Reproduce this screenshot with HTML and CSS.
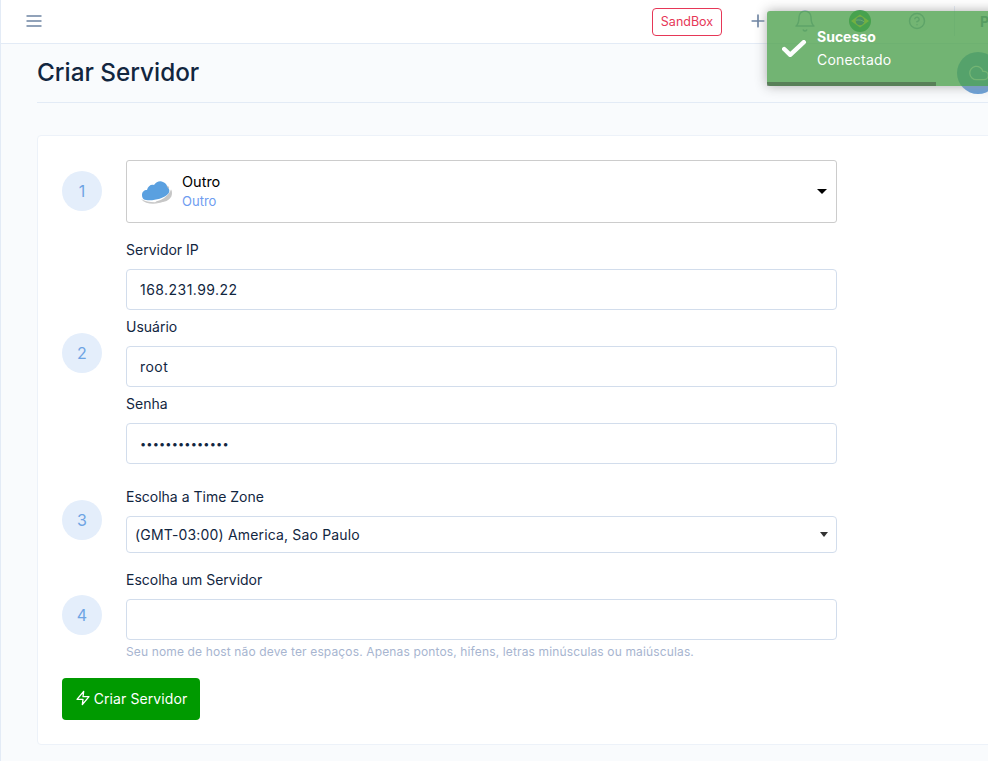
FILE: index.html
```html
<!DOCTYPE html>
<html lang="pt">
<head>
<meta charset="utf-8">
<title>Criar Servidor</title>
<link rel="stylesheet" href="styles.css">
</head>
<body>
<div class="app">
  <header class="topbar">
    <svg class="menu-icon" viewBox="0 0 24 24" width="20" height="20"><path d="M3 12h18M3 6h18M3 18h18"/></svg>
    <div class="topbar-right">
      <span class="sandbox">SandBox</span>
      <svg class="nav-icon plus" viewBox="0 0 24 24" width="20" height="20"><path d="M12 5v14M5 12h14"/></svg>
      <svg class="nav-icon bell" viewBox="0 0 24 24" width="24" height="24"><path d="M18 8A6 6 0 0 0 6 8c0 7-3 9-3 9h18s-3-2-3-9"/><path d="M13.7 21a2 2 0 0 1-3.4 0"/></svg>
      <svg class="flag" viewBox="0 0 22 22" width="22" height="22"><circle cx="11" cy="11" r="11" fill="#229e45"/><path d="M11 4.5 20 11l-9 6.5L2 11z" fill="#f8e509"/><circle cx="11" cy="11" r="4.3" fill="#2b49a3"/><path d="M7 10.200c3-.6 6-.1 8 1.600" stroke="#fff" stroke-width=".8" fill="none"/></svg>
      <svg class="nav-icon help" viewBox="0 0 24 24" width="18" height="18"><circle cx="12" cy="12" r="10"/><path d="M9.100 9a3 3 0 0 1 5.800 1c0 2-3 3-3 3M12 17h.01"/></svg>
      <span class="divider"></span>
      <span class="avatar-letter">P</span>
    </div>
  </header>

  <main class="content">
    <h1 class="page-title">Criar Servidor</h1>
    <section class="card">
      <div class="step step-1">
        <span class="badge">1</span>
        <div class="step-body">
          <div class="provider">
            <svg class="provider-logo" viewBox="0 0 32 28" width="32" height="28">
              <path d="M24 7C28 8 31 11 31 15 31 20 27 23 22 24L14 25Z" fill="#c6c6c6"/>
              <path d="M0 20C7 25 21 24 28 13L30 8" fill="none" stroke="#fff" stroke-width="2.500"/>
              <path d="M0 21C5 27 16 27 23 23 16 25 7 25 0 21Z" fill="#c9c9c9"/>
              <path d="M5 22C2 22 1 19 1 17 1 14 3 12 6 12 7 8 10 6 13 7 15 4 19 2 22 4 25 5 26 7 26 9 29 11 29 14 27 16 22 21 12 23 5 22Z" fill="#5aa0e0"/>
            </svg>
            <div class="provider-text">
              <span class="provider-name">Outro</span>
              <span class="provider-sub">Outro</span>
            </div>
            <span class="caret-black"></span>
          </div>
        </div>
      </div>

      <div class="step step-2">
        <span class="badge">2</span>
        <div class="step-body fields">
          <div class="field">
            <label class="label" for="ip">Servidor IP</label>
            <input class="input" id="ip" type="text" value="168.231.99.22">
          </div>
          <div class="field">
            <label class="label" for="user">Usuário</label>
            <input class="input" id="user" type="text" value="root">
          </div>
          <div class="field">
            <label class="label" for="pass">Senha</label>
            <input class="input input-pass" id="pass" type="password" value="senha12345678x">
          </div>
        </div>
      </div>

      <div class="step step-3">
        <span class="badge">3</span>
        <div class="step-body">
          <label class="label" for="tz">Escolha a Time Zone</label>
          <div class="select-wrap">
            <select class="select" id="tz"><option>(GMT-03:00) America, Sao Paulo</option></select>
            <span class="caret-small"></span>
          </div>
        </div>
      </div>

      <div class="step step-4">
        <span class="badge">4</span>
        <div class="step-body">
          <label class="label" for="host">Escolha um Servidor</label>
          <input class="input" id="host" type="text">
          <small class="help-text">Seu nome de host não deve ter espaços. Apenas pontos, hifens, letras minúsculas ou maiúsculas.</small>
        </div>
      </div>

      <button class="btn" type="button">
        <svg viewBox="0 0 24 24" width="16" height="16"><path d="M13 2 3 14h9l-1 8 10-12h-9z"/></svg>
        Criar Servidor
      </button>
    </section>
  </main>
</div>

<div class="fab">
  <svg viewBox="0 0 24 24" width="20" height="20"><path d="M18 10h-1.300A8 8 0 1 0 9 20h9a5 5 0 0 0 0-10z"/></svg>
</div>

<div class="toast">
  <svg class="toast-check" viewBox="0 0 26 20" width="26" height="20"><path d="M2.200 9l6 5.800L21.800 2.200"/></svg>
  <div class="toast-text">
    <strong class="toast-title">Sucesso</strong>
    <span class="toast-msg">Conectado</span>
  </div>
  <span class="toast-progress"></span>
</div>
</body>
</html>
```

FILE: styles.css
```css
* { box-sizing: border-box; }
html, body { margin: 0; height: 100%; overflow: hidden; }
body {
  background: #f9fbfd;
  font-family: Inter, "Liberation Sans", sans-serif;
  color: #12263f;
  font-size: 14px;
  border-left: 1px solid #e3ebf6;
}
.app { width: 1100px; }

.topbar {
  height: 44px;
  background: #fff;
  border-bottom: 1px solid #e3ebf6;
  display: flex;
  align-items: center;
  padding: 0 0 1px 23px;
  width: 987px;
}
.menu-icon { fill: none; stroke: #6e84a3; stroke-width: 2; }
.topbar-right { margin-left: auto; display: flex; align-items: center; height: 100%; }
.sandbox {
  width: 70px; height: 28px;
  margin-top: 1px;
  border: 1px solid #e63757; border-radius: 4px;
  color: #e63757; font-size: 12.500px;
  display: flex; align-items: center; justify-content: center;
}
.nav-icon { fill: none; stroke: #6e84a3; stroke-width: 2; stroke-linecap: round; stroke-linejoin: round; }
.plus { margin-left: 26px; }
.bell { margin-left: 25px; stroke: #95aac9; stroke-width: 1.500; }
.flag { margin-left: 32px; }
.help { margin-left: 37px; stroke: #95aac9; }
.divider { width: 1px; height: 30px; background: #e3ebf6; margin-left: 28px; }
.avatar-letter { margin-left: 25px; width: 8px; font-weight: 700; color: #6e84a3; font-size: 14px; white-space: nowrap; }

.content { padding: 0 0 0 36px; }
.page-title {
  margin: 0;
  height: 59px;
  font-size: 24.300px;
  font-weight: 500;
  line-height: 56px;
  border-bottom: 1px solid #e3ebf6;
  width: 1000px;
  color: #12263f;
}
.card {
  margin-top: 32px;
  width: 1000px;
  height: 610px;
  background: #fff;
  border: 1px solid #edf2f9;
  border-radius: 4px;
  padding: 24px 24px 0;
}
.step { display: flex; align-items: center; width: 775px; }
.step-1 .badge { margin-top: -1px; }
.step-2 .badge { margin-top: 2px; }
.step-2 { margin-top: 16px; }
.step-3 { margin-top: 22px; }
.step-4 { margin-top: 16px; }
.badge {
  flex: none;
  width: 40px; height: 40px;
  border-radius: 50%;
  background: #e4eefb;
  color: #6ea4e4;
  font-size: 16px;
  display: flex; align-items: center; justify-content: center;
  margin-right: 24px;
}
.step-body { width: 711px; }
.fields { display: flex; flex-direction: column; gap: 6px; }
.label { display: block; height: 21px; line-height: 21px; margin-bottom: 9px; font-size: 14px; }
.input {
  display: block;
  width: 100%; height: 41px;
  border: 1px solid #d2ddec;
  border-radius: 4px;
  background: #fff;
  padding: 0 13px;
  font: inherit;
  letter-spacing: .45px;
  color: #12263f;
}
.input-pass { font-size: 11px; letter-spacing: .15px; }
.provider {
  display: flex; align-items: center;
  height: 63px;
  border: 1px solid #ccc;
  border-radius: 3px;
  padding: 0 9px 0 14px;
}
.provider-logo { flex: none; margin-right: 9px; }
.provider-text { display: flex; flex-direction: column; gap: 4px; margin-top: -2px; }
.provider-name { color: #000; font-size: 14.500px; line-height: 17px; }
.provider-sub { color: #6e9cf0; font-size: 13px; line-height: 15px; }
.caret-black {
  margin-left: auto;
  width: 0; height: 0;
  border: 5px solid transparent;
  border-top-color: #000;
  border-bottom: 0;
}
.select-wrap { position: relative; }
.select {
  display: block;
  width: 100%; height: 37px;
  appearance: none;
  border: 1px solid #d2ddec;
  border-radius: 4px;
  background: #fff;
  padding: 0 8px;
  font: inherit;
  letter-spacing: .17px;
  color: #12263f;
}
.caret-small {
  position: absolute;
  right: 9px; top: 16px;
  width: 0; height: 0;
  border: 4px solid transparent;
  border-top: 5px solid #333;
  border-bottom: 0;
}
.help-text {
  display: block;
  margin-top: 4px;
  font-size: 12px;
  line-height: 16px;
  letter-spacing: .14px;
  color: #a7b5d0;
}
.btn {
  margin-top: 18px;
  width: 138px; height: 42px;
  padding: 0 0 2px;
  background: #009a00;
  border: 0; border-radius: 4px;
  color: #fff;
  font: inherit;
  letter-spacing: .1px;
  display: flex; align-items: center; justify-content: center; gap: 3px;
}
.btn svg { fill: none; stroke: #fff; stroke-width: 2; stroke-linejoin: round; }

.fab {
  position: absolute;
  left: 957px; top: 52px;
  width: 42px; height: 42px;
  border-radius: 50%;
  background: #689fd8;
  display: flex; align-items: center; justify-content: center;
}
.fab svg { fill: none; stroke: #fff; stroke-width: 1.500; margin-left: 2px; }

.toast {
  position: absolute;
  left: 767px; top: 11px;
  width: 300px; height: 75px;
  background: #51a351;
  opacity: .8;
  border-radius: 3px;
  box-shadow: 0 0 12px #999;
  color: #fff;
  padding-left: 50px;
  display: flex; align-items: center;
}
.toast-check {
  position: absolute; left: 15px; top: 29px;
  fill: none; stroke: #fff; stroke-width: 4.400; stroke-linecap: round; stroke-linejoin: round;
}
.toast-text { display: flex; flex-direction: column; gap: 5px; }
.toast-title { font-size: 14px; line-height: 18px; font-weight: 700; }
.toast-msg { font-size: 14px; line-height: 18px; letter-spacing: .2px; }
.toast-progress {
  position: absolute; left: 0; bottom: 0;
  width: 169px; height: 4px;
  background: #000; opacity: .4;
}
```
